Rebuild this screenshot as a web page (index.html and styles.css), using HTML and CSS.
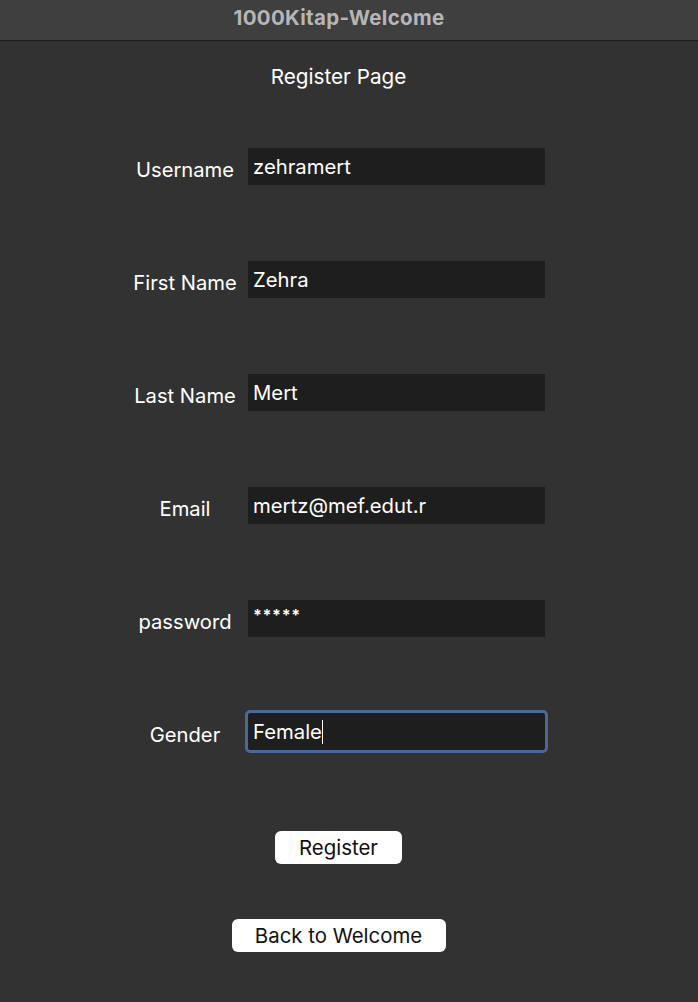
FILE: index.html
```html
<!DOCTYPE html>
<html lang="en">
<head>
<meta charset="utf-8">
<title>1000Kitap-Welcome</title>
<link rel="stylesheet" href="styles.css">
</head>
<body>
<div class="window">
  <header class="titlebar">1000Kitap-Welcome</header>
  <main class="content">
    <h1 class="page-title">Register Page</h1>
    <div class="form">
      <div class="row"><span class="label">Username</span><div class="field">zehramert</div></div>
      <div class="row"><span class="label">First Name</span><div class="field">Zehra</div></div>
      <div class="row"><span class="label">Last Name</span><div class="field">Mert</div></div>
      <div class="row"><span class="label">Email</span><div class="field">mertz@mef.edut.r</div></div>
      <div class="row"><span class="label">password</span><div class="field field-pass">*****</div></div>
      <div class="row"><span class="label">Gender</span><div class="field field-focus">Female<span class="caret"></span></div></div>
    </div>
    <div class="actions">
      <button class="btn btn-register">Register</button>
      <button class="btn btn-back">Back to Welcome</button>
    </div>
  </main>
</div>
</body>
</html>
```
FILE: styles.css
```css
html, body {
  margin: 0;
  padding: 0;
  background: #323232;
}
body {
  font-family: Inter, "Noto Sans", "Liberation Sans", sans-serif;
  color: #ffffff;
}
.window {
  width: 698px;
  height: 1002px;
  background: #323232;
  display: flex;
  flex-direction: column;
}
.titlebar {
  height: 40px;
  box-sizing: border-box;
  padding-bottom: 6px;
  border-bottom: 1px solid #1c1c1c;
  background: #3f3f3f;
  color: #b6b6b6;
  font-weight: 700;
  font-size: 20.5px;
  letter-spacing: 0.3px;
  display: flex;
  align-items: center;
  justify-content: center;
  padding-right: 20px;
  flex: none;
  height: 41px;
}
.content {
  display: flex;
  flex-direction: column;
  align-items: center;
  padding-right: 21px;
}
.page-title {
  margin: 24px 0 0 0;
  font-size: 20.7px;
  font-weight: 400;
  line-height: 24px;
  height: 24px;
}
.form {
  margin-top: 59px;
  display: flex;
  flex-direction: column;
  gap: 76px;
  width: 698px;
  margin-right: -21px;
}
.row {
  display: flex;
  align-items: center;
  height: 37px;
}
.label {
  width: 120px;
  margin-left: 125px;
  margin-right: 3px;
  text-align: center;
  font-size: 20.2px;
  line-height: 24px;
  padding-top: 6px;
}
.field {
  width: 297px;
  height: 37px;
  box-sizing: border-box;
  background: #1e1e1e;
  padding: 0 5px;
  font-size: 20.3px;
  line-height: 36px;
  display: flex;
  align-items: center;
}
.field-pass {
  font-size: 16px;
  font-weight: 700;
  letter-spacing: 0.6px;
  padding-bottom: 8px;
}
.field-focus {
  outline: 3px solid #4b6899;
  outline-offset: 0;
  border-radius: 2px;
}
.caret {
  display: inline-block;
  width: 1px;
  height: 24px;
  background: #ffffff;
}
.actions {
  margin-top: 81px;
  display: flex;
  flex-direction: column;
  align-items: center;
  gap: 55px;
}
.btn {
  font-family: inherit;
  font-size: 20.4px;
  color: #111111;
  background: #ffffff;
  border: none;
  border-radius: 6px;
  height: 33px;
  padding: 0;
  line-height: 33px;
}
.btn-register {
  width: 127px;
}
.btn-back {
  width: 214px;
}
```
